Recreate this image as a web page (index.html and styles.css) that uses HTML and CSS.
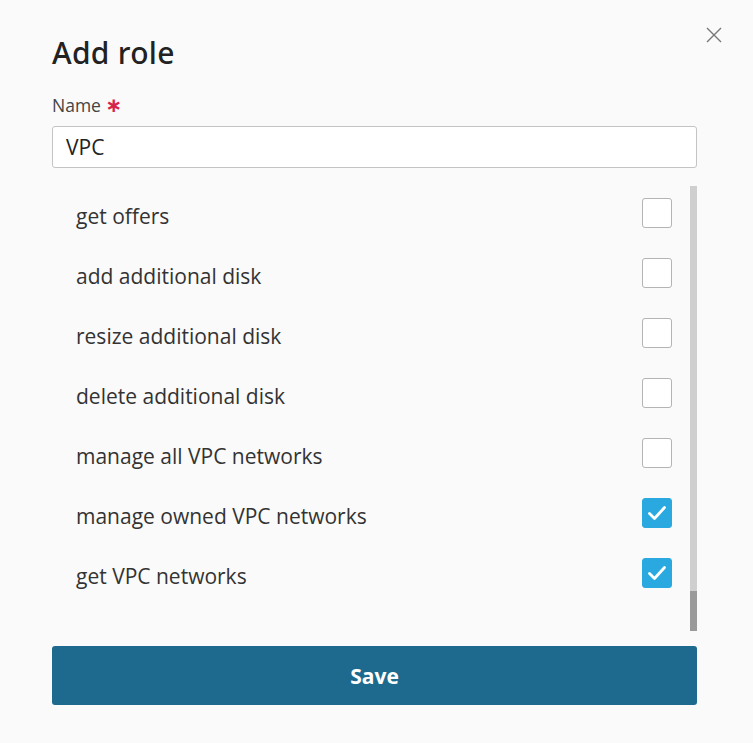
FILE: index.html
```html
<!DOCTYPE html>
<html lang="en">
<head>
    <meta charset="UTF-8">
    <title>Add role</title>
    <link rel="stylesheet" href="styles.css">
</head>
<body>
    <div class="modal">
        <button class="close-btn" aria-label="Close">
            <svg width="16" height="16" viewBox="0 0 16 16"><path d="M1 1L15 15M15 1L1 15" stroke="#777" stroke-width="1.4" fill="none"/></svg>
        </button>
        <h1 class="title">Add role</h1>
        <label class="field-label" for="role-name">Name <span class="required">∗</span></label>
        <input class="text-input" id="role-name" type="text" value="VPC">

        <div class="perm-box">
            <ul class="perm-list">
                <li class="perm-item"><span>get offers</span><span class="check"></span></li>
                <li class="perm-item"><span>add additional disk</span><span class="check"></span></li>
                <li class="perm-item"><span>resize additional disk</span><span class="check"></span></li>
                <li class="perm-item"><span>delete additional disk</span><span class="check"></span></li>
                <li class="perm-item"><span>manage all VPC networks</span><span class="check"></span></li>
                <li class="perm-item"><span>manage owned VPC networks</span><span class="check checked"><svg width="20" height="16" viewBox="0 0 20 16"><path d="M2.5 8.5L7.5 13.5L17.5 2.5" stroke="#fff" stroke-width="2.8" fill="none" stroke-linecap="round" stroke-linejoin="round"/></svg></span></li>
                <li class="perm-item"><span>get VPC networks</span><span class="check checked"><svg width="20" height="16" viewBox="0 0 20 16"><path d="M2.5 8.5L7.5 13.5L17.5 2.5" stroke="#fff" stroke-width="2.8" fill="none" stroke-linecap="round" stroke-linejoin="round"/></svg></span></li>
            </ul>
            <div class="scrollbar"><div class="thumb"></div></div>
        </div>

        <button class="save-btn">Save</button>
    </div>
</body>
</html>
```

FILE: styles.css
```css
html, body {
    margin: 0;
    padding: 0;
    background: #fafafa;
}
body {
    font-family: "Open Sans", Arial, sans-serif;
    color: #333;
}
.modal {
    position: relative;
    width: 645px;
    height: 743px;
    padding: 0 56px 0 52px;
    box-sizing: content-box;
}
.close-btn {
    position: absolute;
    right: 31px;
    top: 27px;
    border: none;
    background: none;
    padding: 0;
    cursor: pointer;
}
.title {
    margin: 0;
    padding-top: 32px;
    font-family: "Noto Sans", "Open Sans", sans-serif;
    font-size: 30px;
    font-weight: 500;
    letter-spacing: 0.3px;
    line-height: 42px;
    color: #222;
}
.field-label {
    display: block;
    margin-top: 19px;
    font-size: 17.5px;
    line-height: 24px;
    color: #444;
}
.required {
    color: #d6234a;
    font-family: "DejaVu Sans", sans-serif;
    font-size: 20px;
    font-weight: 700;
    line-height: 1;
}
.text-input {
    display: block;
    box-sizing: border-box;
    width: 100%;
    height: 42px;
    margin-top: 9px;
    padding: 0 13px;
    border: 1px solid #c4c4c4;
    border-radius: 3px;
    background: #fff;
    font-family: inherit;
    font-size: 21px;
    color: #222;
}
.perm-box {
    display: flex;
    margin-top: 18px;
    height: 445px;
}
.perm-list {
    flex: 1;
    list-style: none;
    margin: 0;
    padding: 14px 18px 0 24px;
}
.perm-item {
    display: flex;
    justify-content: space-between;
    align-items: center;
    height: 60px;
    font-size: 21px;
}
.perm-item:first-child {
    margin-top: -14px;
}
.check {
    box-sizing: border-box;
    width: 30px;
    height: 30px;
    margin-top: -6px;
    border: 1px solid #b4b4b4;
    border-radius: 3px;
    background: #fff;
    display: flex;
    align-items: center;
    justify-content: center;
}
.check.checked {
    background: #29a9e0;
    border-color: #29a9e0;
}
.scrollbar {
    width: 7px;
    height: 445px;
    background: #cfcfcf;
    display: flex;
    flex-direction: column;
    justify-content: flex-end;
}
.thumb {
    height: 40px;
    background: #9a9a9a;
}
.save-btn {
    display: block;
    width: 100%;
    height: 59px;
    margin-top: 15px;
    border: none;
    border-radius: 3px;
    background: #1e6a8f;
    color: #fff;
    font-family: inherit;
    font-size: 21px;
    font-weight: 700;
    cursor: pointer;
}
```
